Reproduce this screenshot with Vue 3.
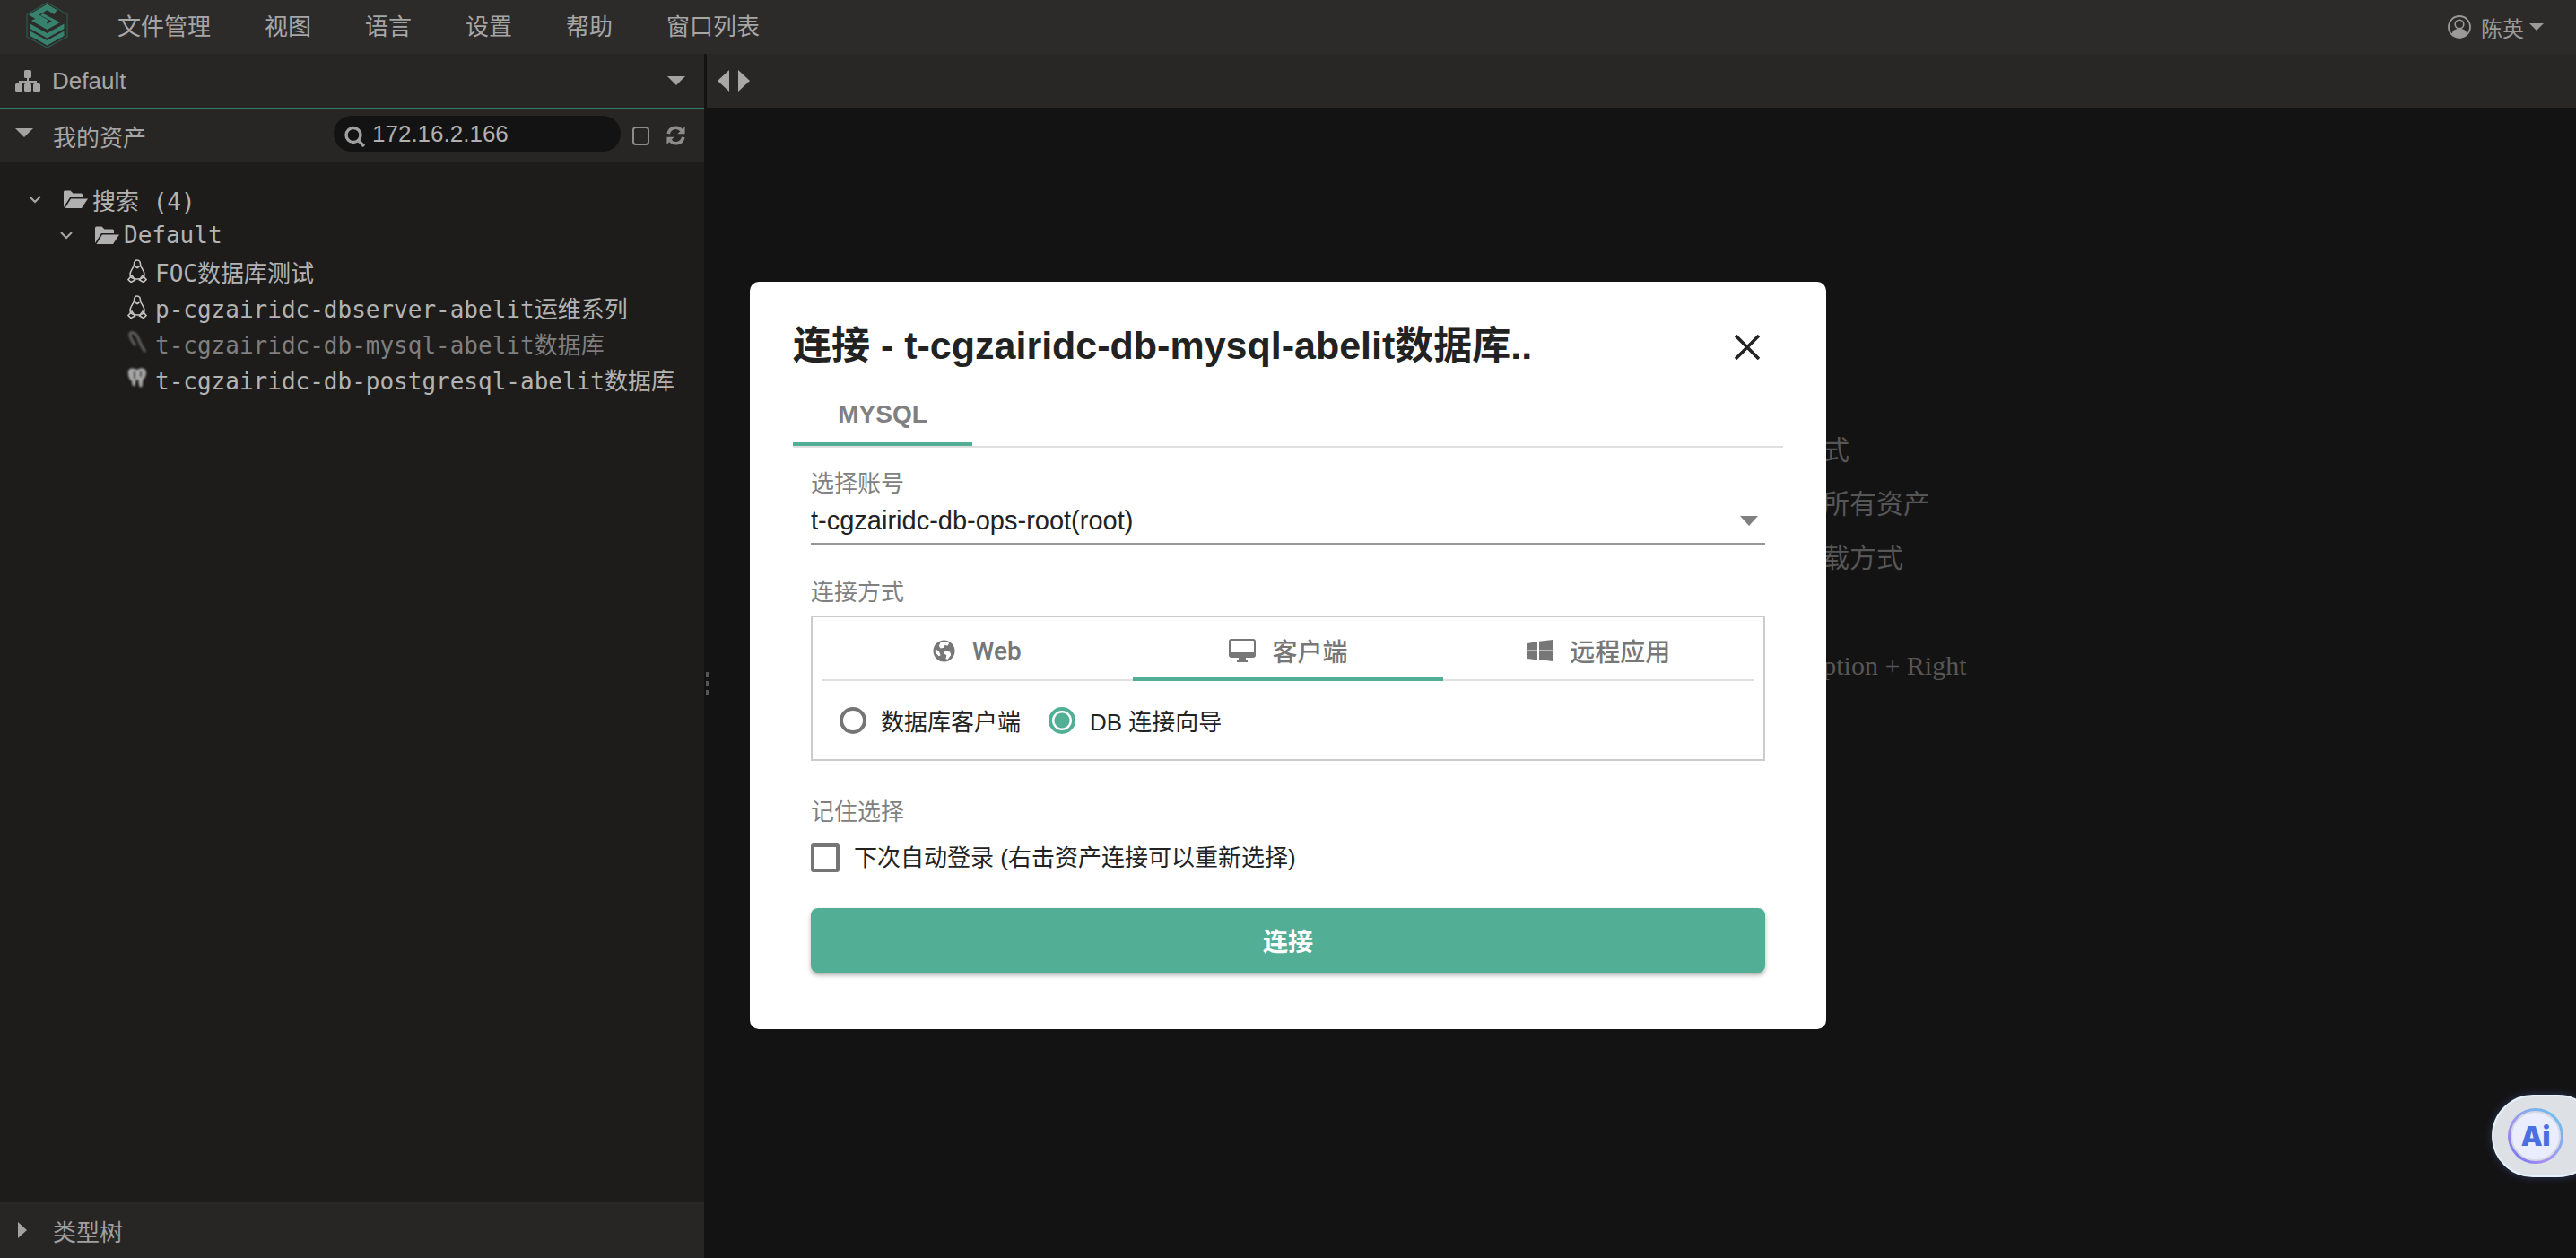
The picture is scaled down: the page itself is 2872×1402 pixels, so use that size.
<script setup>
const menus = ['文件管理', '视图', '语言', '设置', '帮助', '窗口列表']
const assets = [
  { name: 'FOC数据库测试', icon: 'linux', tone: 'on' },
  { name: 'p-cgzairidc-dbserver-abelit运维系列', icon: 'linux', tone: 'on' },
  { name: 't-cgzairidc-db-mysql-abelit数据库', icon: 'mysql', tone: 'off' },
  { name: 't-cgzairidc-db-postgresql-abelit数据库', icon: 'pg', tone: 'on' },
]
const hints = [
  '左侧资产树右击可选择不同的连接方式',
  '在资产树上方的搜索框内都可以过滤所有资产',
  '切换资产树右上角图标选择不同的加载方式',
  '',
  '快捷键切换标签页：Option + Left / Option + Right',
]
</script>

<template>
  <div class="page">
    <header class="topbar">
      <svg class="logo" viewBox="0 0 47 52" width="47" height="52">
        <polygon points="23.5,1 46,14 46,39 23.5,51 1,39 1,14" fill="none" stroke="#2c5a4e" stroke-width="1.2" />
        <path d="M33 11.5 23.5 6 8.5 14.5l15 8.5" fill="none" stroke="#37826d" stroke-width="5.5" />
        <path d="M19 13l19 10-14.500 8L6 21l6-3 12 6.500 5-2.800L16 15z" fill="#37826d" />
        <path d="M4.500 24.500 23.500 35l19-10.500v5.500L23.500 40.500 4.500 30z" fill="#37826d" />
        <path d="M4.500 32.500 23.500 43l19-10.500V38L23.500 48.500 4.500 38z" fill="#37826d" />
      </svg>
      <nav class="menus">
        <span v-for="m in menus" :key="m" class="menu">{{ m }}</span>
      </nav>
      <div class="user">
        <svg viewBox="0 0 26 26" width="26" height="26">
          <circle cx="13" cy="13" r="12" fill="none" stroke="#9a9a9a" stroke-width="1.800" />
          <circle cx="13" cy="10" r="4.800" fill="none" stroke="#9a9a9a" stroke-width="1.600" />
          <path d="M4.500 21c1-4.500 4-6 8.500-6s7.500 1.500 8.500 6a12 12 0 0 1-17 0z" fill="#9a9a9a" />
        </svg>
        <span class="user-name">陈英</span>
        <i class="tri-down small"></i>
      </div>
    </header>

    <div class="body">
      <aside class="side">
        <div class="org">
          <svg viewBox="0 0 28 24" width="28" height="24" fill="#a3a3a3">
            <rect x="10" y="0" width="8" height="9" rx="1.500" />
            <path d="M13 9h2v3h9v4h-2v-2h-7v2h-2v-2H6v2H4v-4h9z" />
            <rect x="0" y="15" width="8" height="9" rx="1.500" />
            <rect x="10" y="15" width="8" height="9" rx="1.500" />
            <rect x="20" y="15" width="8" height="9" rx="1.500" />
          </svg>
          <span class="org-name">Default</span>
          <i class="tri-down"></i>
        </div>

        <div class="assets-head">
          <i class="tri-down left"></i>
          <span class="assets-title">我的资产</span>
          <div class="search">
            <svg viewBox="0 0 25 24" width="25" height="24" fill="none" stroke="#a0a0a0" stroke-width="3.400">
              <circle cx="11" cy="10.500" r="8" />
              <path d="M16.500 16.500 23 23" />
            </svg>
            <span class="search-text">172.16.2.166</span>
          </div>
          <span class="square"></span>
          <svg class="refresh" viewBox="0 0 24 24" width="23" height="22" fill="none" stroke="#8c8c8c" stroke-width="4">
            <path d="M3 10a9 9 0 0 1 16-4" />
            <path d="M21 14a9 9 0 0 1-16 4" />
            <path d="M23 1v9h-9z" fill="#8c8c8c" stroke="none" />
            <path d="M1 23v-9h9z" fill="#8c8c8c" stroke="none" />
          </svg>
        </div>

        <div class="tree">
          <div class="row lv0">
            <svg class="chev" viewBox="0 0 14 9" width="14" height="9"><path d="M1 1l6 6 6-6" fill="none" stroke="#a8a8a8" stroke-width="2" /></svg>
            <svg class="folder" viewBox="0 0 28 22" width="28" height="22" fill="#b0b0b0">
              <path d="M1 20V3a1.500 1.500 0 0 1 1.500-1.500h6l3 3h9A1.500 1.500 0 0 1 22 6v3H8z" />
              <path d="M9 10.500h19L21 21H2.500z" />
            </svg>
            <span>搜索 (4)</span>
          </div>
          <div class="row lv1">
            <svg class="chev" viewBox="0 0 14 9" width="14" height="9"><path d="M1 1l6 6 6-6" fill="none" stroke="#a8a8a8" stroke-width="2" /></svg>
            <svg class="folder" viewBox="0 0 28 22" width="28" height="22" fill="#b0b0b0">
              <path d="M1 20V3a1.500 1.500 0 0 1 1.500-1.500h6l3 3h9A1.500 1.500 0 0 1 22 6v3H8z" />
              <path d="M9 10.500h19L21 21H2.500z" />
            </svg>
            <span>Default</span>
          </div>
          <div v-for="a in assets" :key="a.name" class="row leaf" :class="a.tone">
            <svg v-if="a.icon === 'linux'" class="asset-icon" viewBox="0 0 22 26" width="22" height="26" fill="none" stroke="#c4c4c4" stroke-width="1.600">
              <path d="M11 1C8.500 1 7.500 3 7.500 6c0 3-4.500 6-4.500 11 0 3 3 5 8 5s8-2 8-5c0-5-4.500-8-4.500-11 0-3-1-5-3.500-5z" />
              <path d="M1 22.500 5 18l3.500 5-4.500 2.500z" />
              <path d="M21 22.500 17 18l-3.500 5 4.500 2.500z" />
              <path d="M8.500 8l2.500 1.500L13.500 8" />
            </svg>
            <svg v-else-if="a.icon === 'mysql'" class="asset-icon blur" viewBox="0 0 22 26" width="22" height="26" fill="none" stroke="#606060" stroke-width="3">
              <path d="M3 2c4-1 7 1 9 6s4 10 8 15" />
              <path d="M3 2c-1 4 2 9 6 14" />
            </svg>
            <svg v-else class="asset-icon blur" viewBox="0 0 22 26" width="22" height="26">
              <path d="M1.500 3c3-2.500 6-1.500 9.500 0 3-2 6.500-2.500 9 0 2 3 1 8-2.500 11l-1 8c-2 1-3.500 0-3.500-2l-1-6c-2 0-2.500 0-2.500 1l-1 6c-2.500 1-3.500-1-3.500-5C1 13 0 7 1.500 3z" fill="#a8a8a8" />
              <path d="M8 5v8M15 5v6" stroke="#333" stroke-width="1.500" />
            </svg>
            <span>{{ a.name }}</span>
          </div>
        </div>

        <div class="type-tree">
          <i class="tri-right"></i>
          <span>类型树</span>
        </div>
      </aside>

      <div class="splitter"><span></span><span></span><span></span></div>

      <main class="main">
        <div class="strip">
          <i class="arrow-l"></i>
          <i class="arrow-r"></i>
        </div>
        <div class="hints">
          <p v-for="(h, i) in hints" :key="i" class="hint">{{ h }}</p>
        </div>
      </main>
    </div>

    <div class="ai">
      <div class="ai-ring">
        <div class="ai-disc">Ai</div>
      </div>
    </div>

    <div class="overlay">
      <section class="dialog">
        <div class="dialog-head">
          <h2 class="dialog-title">连接 - t-cgzairidc-db-mysql-abelit数据库..</h2>
          <svg class="close" viewBox="0 0 28 28" width="28" height="28"><path d="M1 1l26 26M27 1 1 27" stroke="#222" stroke-width="3.600" fill="none" /></svg>
        </div>
        <div class="proto-tabs">
          <div class="proto-tab">MYSQL</div>
        </div>
        <div class="form">
          <div class="label first">选择账号</div>
          <div class="select">
            <span>t-cgzairidc-db-ops-root(root)</span>
            <i class="select-tri"></i>
          </div>

          <div class="label second">连接方式</div>
          <div class="method">
            <div class="method-tabs">
              <div class="method-tab">
                <svg viewBox="0 0 26 26" width="25" height="25">
                  <circle cx="13" cy="13" r="12.500" fill="#777" />
                  <path d="M9 3l6-1 4 2-2 3-3-1-1 3-4 1-2-3zM14 13l6 1 1 4-4 5-2-1 1-4-3-2zM3 11l4 2 2 5-2 1-4-4z" fill="#fff" />
                </svg>
                <span>Web</span>
              </div>
              <div class="method-tab active">
                <svg viewBox="0 0 30 26" width="30" height="26">
                  <rect x="1" y="1" width="28" height="19" rx="2" fill="none" stroke="#777" stroke-width="2" />
                  <path d="M1 15h28v3a2 2 0 0 1-2 2H3a2 2 0 0 1-2-2z" fill="#777" />
                  <path d="M11 20h8v4h2v2H9v-2h2z" fill="#777" />
                </svg>
                <span>客户端</span>
              </div>
              <div class="method-tab">
                <svg viewBox="0 0 28 24" width="28" height="24" fill="#777">
                  <path d="M0 4l11-2v9.500H0zM13 1.700 28 0v11.500H13zM0 13h11v9.500L0 21zM13 13h15v11l-15-2z" />
                </svg>
                <span>远程应用</span>
              </div>
            </div>
            <div class="radios">
              <label class="radio"><i class="dot"></i><span>数据库客户端</span></label>
              <label class="radio"><i class="dot on"></i><span>DB 连接向导</span></label>
            </div>
          </div>

          <div class="label third">记住选择</div>
          <label class="check"><i class="box"></i><span>下次自动登录 (右击资产连接可以重新选择)</span></label>

          <button class="submit">连接</button>
        </div>
      </section>
    </div>
  </div>
</template>

<style>
html, body { margin: 0; background: #141314; }
</style>

<style scoped>
.page {
  position: relative;
  width: 2872px;
  height: 1402px;
  overflow: hidden;
  display: flex;
  flex-direction: column;
  background: #141314;
  color: #a6a6a6;
  font-family: "Liberation Sans", "Noto Sans CJK SC", sans-serif;
  font-size: 26px;
}
i { display: block; font-style: normal; }

.topbar {
  height: 60px;
  flex: none;
  display: flex;
  align-items: center;
  background: #2d2a2a;
  padding: 0 36px 0 29px;
}
.logo { flex: none; margin-top: -4px; }
.menus { display: flex; margin-left: 55px; gap: 60px; flex: 1; }
.menu { line-height: 60px; width: auto; }
.user { display: flex; align-items: center; color: #9a9a9a; }
.user-name { font-size: 24px; margin-left: 11px; margin-right: 6px; }

.tri-down { width: 0; height: 0; border-left: 10px solid transparent; border-right: 10px solid transparent; border-top: 10px solid #a3a3a3; }
.tri-down.small { border-left-width: 8px; border-right-width: 8px; border-top-width: 8px; border-top-color: #9a9a9a; }
.tri-down.left { margin-left: 17px; margin-top: -6px; }
.tri-right { width: 0; height: 0; border-top: 9px solid transparent; border-bottom: 9px solid transparent; border-left: 10px solid #a3a3a3; }

.body { flex: 1; display: flex; min-height: 0; }
.side { width: 785px; flex: none; display: flex; flex-direction: column; background: #1d1c1b; }
.org {
  height: 60px;
  box-sizing: border-box;
  display: flex;
  align-items: center;
  padding: 0 21px 0 17px;
  background: #282625;
}
.org-name { margin-left: 13px; flex: 1; }
.assets-head {
  height: 60px;
  box-sizing: border-box;
  display: flex;
  align-items: center;
  background: #282625;
  border-top: 2px solid #2f7d68;
}
.assets-title { margin-left: 22px; width: 313px; }
.search {
  width: 320px;
  height: 40px;
  margin-top: -4px;
  box-sizing: border-box;
  border-radius: 20px;
  background: #141313;
  display: flex;
  align-items: center;
  padding-left: 11px;
}
.search svg { margin-top: 6px; }
.search-text { margin-left: 7px; color: #b0b0b0; }
.square {
  width: 19px;
  height: 21px;
  box-sizing: border-box;
  border: 2px solid #8c8c8c;
  border-radius: 4px;
  margin-left: 13px;
}
.refresh { margin-left: 18px; }

.tree { flex: 1; padding-top: 22px; font-family: "DejaVu Sans Mono", "Noto Sans CJK SC", monospace; color: #b3b3b3; }
.row { height: 40px; display: flex; align-items: center; white-space: nowrap; }
.chev { flex: none; }
.folder { flex: none; margin-left: 24px; margin-right: 5px; }
.lv0 { padding-left: 32px; }
.lv1 { padding-left: 67px; }
.leaf { padding-left: 142px; }
.asset-icon { flex: none; margin-right: 9px; }
.blur { filter: blur(0.8px); }
.leaf.off { color: #7f7f7f; }
.type-tree {
  height: 62px;
  flex: none;
  display: flex;
  align-items: center;
  background: #282625;
  padding-left: 20px;
  gap: 29px;
  color: #a0a0a0;
}

.splitter {
  width: 3px;
  flex: none;
  display: flex;
  flex-direction: column;
  justify-content: center;
  gap: 5px;
  padding-top: 60px;
  box-sizing: border-box;
}
.splitter span { width: 4px; height: 5px; margin-left: 2px; background: #555; }

.main { flex: 1; min-width: 0; display: flex; flex-direction: column; }
.strip {
  height: 60px;
  flex: none;
  background: #292726;
  display: flex;
  align-items: center;
  padding-left: 12px;
  gap: 10px;
}
.arrow-l { width: 0; height: 0; border-top: 12px solid transparent; border-bottom: 12px solid transparent; border-right: 13px solid #a8a8a8; }
.arrow-r { width: 0; height: 0; border-top: 12px solid transparent; border-bottom: 12px solid transparent; border-left: 13px solid #a8a8a8; }
.hints {
  padding: 352px 0 0 764px;
  font-family: "Liberation Serif", "Noto Sans CJK SC", serif;
  font-size: 30px;
  color: #565656;
}
.hint { margin: 0; height: 60px; line-height: 60px; white-space: nowrap; }

.ai {
  position: absolute;
  left: 2778px;
  top: 1220px;
  width: 120px;
  height: 92px;
  box-sizing: border-box;
  border-radius: 46px;
  background: #dde1e6;
  border: 2px solid #e6f1fc;
  box-shadow: 0 0 10px rgba(90, 130, 230, 0.35);
  display: flex;
  align-items: center;
  padding-left: 16px;
}
.ai-ring {
  width: 62px;
  height: 62px;
  box-sizing: border-box;
  border-radius: 50%;
  padding: 3px;
  background: linear-gradient(45deg, #5d6ff0 0%, #a98ff0 35%, #5fc9ee 100%);
  display: flex;
}
.ai-disc {
  flex: 1;
  border-radius: 50%;
  background: #e9edfd;
  border: 2px solid #d6d9e4;
  display: flex;
  align-items: center;
  justify-content: center;
  color: #4a6fe0;
  font: 900 30px "Inter", sans-serif;
}

.overlay {
  position: absolute;
  inset: 0;
  display: flex;
  justify-content: center;
  align-items: flex-start;
  padding-top: 314px;
  box-sizing: border-box;
}
.dialog {
  width: 1200px;
  box-sizing: border-box;
  background: #fff;
  border-radius: 10px;
  padding: 41px 48px 63px;
}
.dialog-head { position: relative; height: 60px; }
.dialog-title {
  margin: 0;
  font-size: 43px;
  font-weight: 700;
  line-height: 60px;
  color: #222;
  white-space: nowrap;
}
.close { position: absolute; right: 26px; top: 18px; }
.proto-tabs { margin-top: 15px; border-bottom: 2px solid #e0e0e0; }
.proto-tab {
  width: 200px;
  height: 67px;
  box-sizing: border-box;
  padding-top: 1px;
  display: flex;
  align-items: center;
  justify-content: center;
  border-bottom: 4px solid #52ae94;
  font-size: 28px;
  font-weight: 700;
  color: #808080;
}
.form { padding: 0 20px; }
.label { line-height: 36px; color: #808080; }
.label.first { margin-top: 22px; }
.label.second { margin-top: 35px; }
.label.third { margin-top: 39px; }
.select {
  height: 50px;
  box-sizing: border-box;
  border-bottom: 2px solid #969696;
  padding-bottom: 2px;
  display: flex;
  align-items: center;
  justify-content: space-between;
  font-size: 29px;
  color: #222;
  padding-right: 8px;
}
.select-tri { width: 0; height: 0; border-left: 10px solid transparent; border-right: 10px solid transparent; border-top: 11px solid #808080; }
.method {
  margin-top: 8px;
  height: 162px;
  box-sizing: border-box;
  border: 2px solid #ccc;
  padding: 0 10px;
}
.method-tabs { display: flex; height: 71px; box-sizing: border-box; border-bottom: 2px solid #e0e0e0; }
.method-tab {
  flex: 1;
  height: 71px;
  box-sizing: border-box;
  display: flex;
  align-items: center;
  justify-content: center;
  gap: 19px;
  padding-top: 3px;
  font-family: "Roboto", "Noto Sans CJK SC", sans-serif;
  font-size: 28px;
  font-weight: 500;
  color: #777;
}
.method-tab.active { border-bottom: 4px solid #52ae94; padding-top: 7px; }
.radios { display: flex; align-items: center; height: 87px; padding-left: 20px; gap: 31px; color: #222; }
.radio { display: flex; align-items: center; gap: 16px; }
.dot {
  width: 30px;
  height: 30px;
  box-sizing: border-box;
  border-radius: 50%;
  border: 4px solid #757575;
}
.dot.on { border-color: #52ae94; background: radial-gradient(circle, #52ae94 0 8px, transparent 9px); }
.check { display: flex; align-items: center; gap: 16px; margin-top: 17px; color: #222; line-height: 32px; }
.box {
  width: 32px;
  height: 32px;
  box-sizing: border-box;
  border: 4px solid #757575;
  border-radius: 3px;
}
.submit {
  display: block;
  width: 100%;
  height: 72px;
  margin-top: 40px;
  border: 0;
  border-radius: 8px;
  background: #52ae94;
  color: #fff;
  font-family: inherit;
  font-size: 28px;
  font-weight: 700;
  box-shadow: 0 3px 5px rgba(0, 0, 0, 0.3);
}
</style>
